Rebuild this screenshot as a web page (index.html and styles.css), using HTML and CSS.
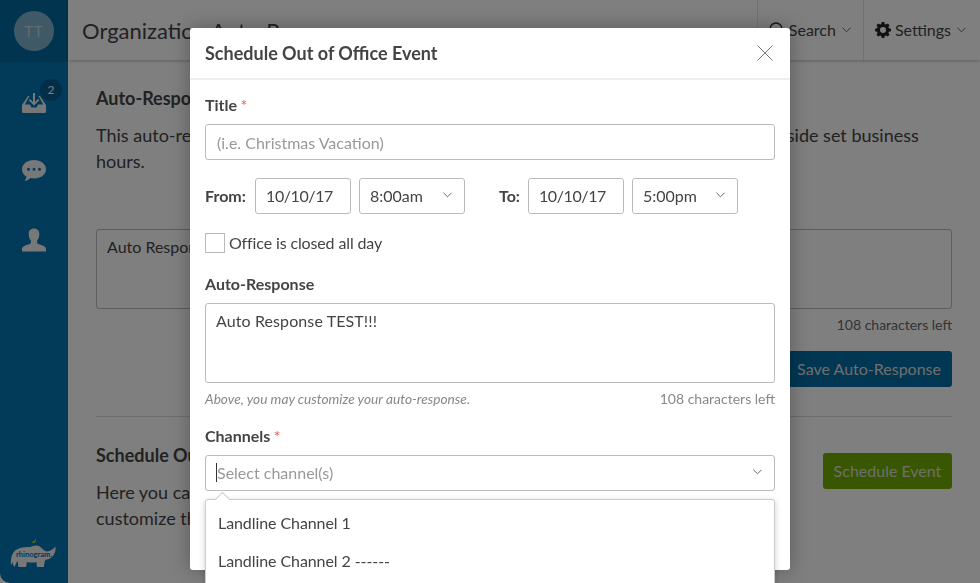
FILE: index.html
```html
<!DOCTYPE html>
<html lang="en">
<head>
    <meta charset="UTF-8">
    <meta name="viewport" content="width=device-width, initial-scale=1.0">
    <title>Organization Auto-Response</title>
    <link rel="stylesheet" href="styles.css">
</head>
<body>

    <div class="app">
        <aside class="sidebar">
            <div class="sidebar-top">
                <div class="avatar">TT</div>
            </div>
            <nav class="sidebar-nav">
                <a class="nav-item" href="#">
                    <svg class="nav-icon" viewBox="0 0 24 24"><path d="M6 6 0 15v6.500A1.500 1.500 0 0 0 1.500 23h21a1.500 1.500 0 0 0 1.500-1.500V15L18 6h-1.500l4.700 8.500H16l-1.500 3h-5l-1.500-3H2.800L7.500 6z"/><path d="M11 3h2v9l3-3 1.300 1.300L12 15.600 6.700 10.300 8 9l3 3z"/></svg>
                    <span class="nav-badge">2</span>
                </a>
                <a class="nav-item" href="#">
                    <svg class="nav-icon" viewBox="0 0 24 24"><path fill-rule="evenodd" d="M12 1c6.600 0 12 3.800 12 9.200s-5.400 9.300-12 9.300c-1.200 0-2.400-.1-3.500-.4-1.500 1.500-3.500 2.500-6 3 1-1.300 1.700-2.600 1.900-4.500C1.700 16 0 13.400 0 10.200 0 4.800 5.400 1 12 1zM6.500 8.700a1.500 1.500 0 1 0 0 3 1.500 1.500 0 0 0 0-3zm5.500 0a1.500 1.500 0 1 0 0 3 1.500 1.500 0 0 0 0-3zm5.500 0a1.500 1.500 0 1 0 0 3 1.500 1.500 0 0 0 0-3z"/></svg>
                </a>
                <a class="nav-item" href="#">
                    <svg class="nav-icon" viewBox="0 0 24 24"><path d="M12 .5c3.400 0 5.300 2.300 5.300 5.500 0 2.600-.8 5-2.200 6.400v2.300c0 .8 1 1.200 3.400 2.100 3.200 1.100 5.500 2.200 5.500 3.900v2.800H0v-2.800c0-1.700 2.300-2.800 5.500-3.900 2.400-.9 3.400-1.300 3.400-2.100v-2.300C7.500 11 6.700 8.600 6.700 6 6.700 2.800 8.600.5 12 .5z"/></svg>
                </a>
            </nav>
            <div class="logo">
                <svg class="logo-rhino" viewBox="0 -2 48 32"><path class="logo-bird" d="M22 3c.4-1.400 1.400-2.300 2.800-2.400l.5-2.400.7 2.200c-.3 1.900-1.800 3-4 2.600z"/><path d="M1 25c-.6-5 .4-11 4-14.500 4-3 10-3.800 15-3.500 2.500-.5 4.500-1.800 7-1.500 2 .3 3.700 1.500 5 3l3 2.500c1.500.5 3 .5 4.500 0 2-.8 4-2.300 6-4.500.5 4-.7 8-3.500 10.500-2 1.700-4 2.500-6.500 2.700-1 2-1.500 4-1.500 7.300h-7l-.7-5c-3 .8-6 .8-9.300 0l-1 5H8.500c-.5-2-.8-4-.5-6-1.500 1.200-2.500 3-3 5.500l-1.500-.5c-.5-1.500-.7-2.500-.5-4z"/></svg>
                <span class="logo-text">rhinogram.</span>
            </div>
        </aside>

        <div class="main">
            <header class="topbar">
                <h1 class="topbar-title">Organization Auto-Response</h1>
                <div class="topbar-item">
                    <svg class="search-icon" viewBox="0 0 16 16"><circle cx="7" cy="7" r="6"/><path d="M11.500 11.500 15.500 15.500"/></svg>
                    Search
                    <svg class="chevron" viewBox="0 0 10 6"><path d="M.5.5 5 5 9.500.5"/></svg>
                </div>
                <div class="topbar-item">
                    <svg class="gear-icon" viewBox="0 0 16 16"><path fill-rule="evenodd" d="M6.700 0h2.600l.4 2.100 1.200.5 1.800-1.200 1.900 1.900-1.200 1.800.5 1.200 2.100.4v2.600l-2.100.4-.5 1.200 1.200 1.800-1.900 1.900-1.800-1.200-1.200.5-.4 2.100H6.700l-.4-2.100-1.200-.5-1.800 1.200-1.900-1.900 1.200-1.800-.5-1.200L0 9.300V6.700l2.100-.4.5-1.200-1.200-1.800 1.900-1.900 1.800 1.200 1.200-.5zM8 5a3 3 0 1 0 0 6 3 3 0 0 0 0-6z"/></svg>
                    Settings
                    <svg class="chevron" viewBox="0 0 10 6"><path d="M.5.5 5 5 9.500.5"/></svg>
                </div>
            </header>

            <section class="section section-first">
                <h2 class="section-title">Auto-Response</h2>
                <p class="section-text">This auto-response will be sent to any new contacts who message your organization outside set business hours.</p>
                <div class="page-textarea">Auto Response TEST!!!</div>
                <div class="page-count">108 characters left</div>
                <div class="section-actions">
                    <button class="btn btn-blue" type="button">Save Auto-Response</button>
                </div>
            </section>

            <section class="section section-second">
                <div class="section-row">
                    <div class="section-copy">
                        <h2 class="section-title">Schedule Out of Office</h2>
                        <p class="section-text">Here you can schedule events when your office will be closed and<br>customize the message that is sent.</p>
                    </div>
                    <button class="btn btn-green" type="button">Schedule Event</button>
                </div>
            </section>
        </div>
    </div>

    <div class="overlay"></div>

    <div class="modal">
        <div class="modal-header">
            <h3 class="modal-title">Schedule Out of Office Event</h3>
            <svg class="modal-close" viewBox="0 0 16 16"><path d="M.5.500 15.500 15.500M15.500.500.500 15.500"/></svg>
        </div>
        <form class="modal-body">
            <label class="label" for="event-title">Title <span class="req">*</span></label>
            <input class="input" type="text" id="event-title" placeholder="(i.e. Christmas Vacation)">

            <div class="time-row">
                <div class="time-group">
                    <span class="time-label">From:</span>
                    <div class="field field-date">10/10/17</div>
                    <div class="field field-time">8:00am
                        <svg class="chevron" viewBox="0 0 10 6"><path d="M.5.5 5 5 9.500.5"/></svg>
                    </div>
                </div>
                <div class="time-group">
                    <span class="time-label">To:</span>
                    <div class="field field-date">10/10/17</div>
                    <div class="field field-time">5:00pm
                        <svg class="chevron" viewBox="0 0 10 6"><path d="M.5.5 5 5 9.500.5"/></svg>
                    </div>
                </div>
            </div>

            <div class="check-row">
                <span class="checkbox"></span>
                Office is closed all day
            </div>

            <div class="label label-response">Auto-Response</div>
            <div class="textarea">Auto Response TEST!!!</div>
            <div class="hint-row">
                <em class="hint">Above, you may customize your auto-response.</em>
                <span class="count">108 characters left</span>
            </div>

            <div class="label label-channels">Channels <span class="req">*</span></div>
            <div class="select-wrap">
                <div class="select">
                    <span class="caret"></span>
                    <span class="placeholder">Select channel(s)</span>
                    <svg class="chevron" viewBox="0 0 10 6"><path d="M.5.5 5 5 9.500.5"/></svg>
                </div>
                <div class="dropdown">
                    <div class="dropdown-item">Landline Channel 1</div>
                    <div class="dropdown-item">Landline Channel 2 ------</div>
                </div>
            </div>
        </form>
    </div>

</body>
</html>
```

FILE: styles.css
```css
* {
    box-sizing: border-box;
}
html, body {
    height: 100%;
}
body {
    margin: 0;
    overflow: hidden;
    font-family: Lato, "Open Sans", sans-serif;
    font-size: 16px;
    color: #444;
    background: #fff;
}
h1, h2, h3, p {
    margin: 0;
}

/* page behind the modal */
.app {
    display: flex;
    height: 583px;
    border-radius: 0 0 10px 10px;
    overflow: hidden;
    background: #fff;
}
.sidebar {
    width: 68px;
    flex-shrink: 0;
    display: flex;
    flex-direction: column;
    background: #0277b2;
}
.sidebar-top {
    height: 62px;
    display: flex;
    align-items: center;
    justify-content: center;
    background: #03699e;
}
.avatar {
    width: 40px;
    height: 40px;
    border-radius: 50%;
    display: flex;
    align-items: center;
    justify-content: center;
    font-size: 15px;
    letter-spacing: 1px;
    color: #c4d8e2;
    background: #7fb4cc;
}
.sidebar-nav {
    flex: 1;
    display: flex;
    flex-direction: column;
    align-items: center;
    padding-top: 28px;
    gap: 45px;
}
.nav-item {
    position: relative;
    display: block;
    width: 24px;
    height: 24px;
}
.nav-icon {
    display: block;
    width: 24px;
    height: 24px;
    fill: #f0f0f0;
}
.nav-badge {
    position: absolute;
    top: -11px;
    left: 18px;
    width: 22px;
    height: 22px;
    border-radius: 50%;
    font-size: 12px;
    line-height: 22px;
    text-align: center;
    color: #fff;
    background: #065c90;
}
.logo {
    position: relative;
    height: 32px;
    margin: 0 10px 13px;
}
.logo-rhino {
    display: block;
    width: 48px;
    height: 32px;
    fill: #f0f0f0;
}
.logo-rhino .logo-bird {
    fill: #a0d030;
}
.logo-text {
    position: absolute;
    top: 12px;
    left: 6px;
    font-size: 7.500px;
    font-weight: 700;
    color: #0277b2;
}

.main {
    flex: 1;
    min-width: 0;
}
.topbar {
    height: 60px;
    display: flex;
    align-items: stretch;
    padding-right: 2px;
    box-shadow: 0 1px 3px rgba(0, 0, 0, .25);
}
.topbar-title {
    flex: 1;
    padding-left: 14px;
    font-size: 22px;
    font-weight: 400;
    line-height: 62px;
    white-space: nowrap;
}
.topbar-item {
    display: flex;
    align-items: center;
    gap: 4px;
    padding: 0 12px 0 11px;
    border-left: 1px solid #e4e4e4;
    font-size: 16px;
    line-height: 1;
}
.chevron {
    width: 9px;
    height: 6px;
    margin-left: 2px;
    fill: none;
    stroke: #555;
    stroke-width: 1;
}
.search-icon {
    width: 16px;
    height: 16px;
    fill: none;
    stroke: #333;
    stroke-width: 1.500;
}
.gear-icon {
    width: 16px;
    height: 16px;
    fill: #222;
}

.section {
    margin: 0 28px;
}
.section-first {
    padding-top: 26px;
    height: 357px;
    border-bottom: 1px solid #ddd;
}
.section-second {
    padding-top: 26px;
}
.section-title {
    font-size: 18px;
    font-weight: 700;
    line-height: 24px;
}
.section-text {
    margin-top: 12px;
    font-size: 18px;
    line-height: 26px;
}
.page-textarea {
    height: 80px;
    margin-top: 55px;
    padding: 7px 10px;
    border: 1px solid #bbb;
    border-radius: 3px;
}
.page-count {
    margin-top: 7px;
    text-align: right;
    font-size: 14px;
    line-height: 17px;
    color: #666;
}
.section-actions {
    display: flex;
    justify-content: flex-end;
    margin-top: 18px;
}
.section-row {
    display: flex;
    justify-content: space-between;
    align-items: flex-start;
}
.section-copy {
    width: 600px;
}
.btn {
    height: 36px;
    border: none;
    border-radius: 3px;
    font-family: inherit;
    font-size: 16px;
    color: #ddd;
}
.btn-blue {
    padding: 0 11px 2px 10px;
    background: #036ea6;
}
.btn-green {
    margin-top: 10px;
    width: 129px;
    padding: 0 0 2px;
    background: #72ae00;
}

.overlay {
    position: fixed;
    top: 0;
    right: 0;
    bottom: 0;
    left: 0;
    background: rgba(0, 0, 0, .5);
}

/* modal */
.modal {
    position: absolute;
    top: 28px;
    left: 190px;
    width: 600px;
    height: 542px;
    border-radius: 3px;
    background: #fff;
    box-shadow: 0 0 20px rgba(0, 0, 0, .3);
}
.modal-header {
    height: 52px;
    display: flex;
    align-items: center;
    justify-content: space-between;
    padding: 0 17px 0 15px;
    border-bottom: 2px solid #eee;
}
.modal-title {
    font-size: 18px;
    font-weight: 700;
}
.modal-close {
    width: 16px;
    height: 16px;
    fill: none;
    stroke: #777;
    stroke-width: 1;
}
.modal-body {
    padding: 13px 15px 0;
}
.label {
    display: block;
    font-weight: 700;
    line-height: 24px;
}
.req {
    margin-left: -.5px;
    font-weight: 400;
    color: #e55;
}
.input {
    display: block;
    width: 100%;
    height: 36px;
    margin-top: 7px;
    padding: 0 11px;
    border: 1px solid #bbb;
    border-radius: 3px;
    font-family: inherit;
    font-size: 16px;
    color: #444;
}
.input::placeholder {
    color: #999;
}
.time-row {
    display: flex;
    gap: 34px;
    margin-top: 18px;
}
.time-group {
    display: flex;
    align-items: center;
    gap: 8px;
}
.time-label {
    padding-bottom: 1px;
    font-weight: 700;
}
.time-group:first-child .time-label {
    width: 42px;
}
.field {
    height: 36px;
    display: flex;
    align-items: center;
    border: 1px solid #bbb;
    border-radius: 3px;
    padding: 0 10px 2px;
}
.field-date {
    width: 96px;
    letter-spacing: -.4px;
}
.field-time {
    width: 106px;
    padding-right: 12px;
    justify-content: space-between;
}
.check-row {
    display: flex;
    align-items: center;
    gap: 4px;
    margin-top: 19px;
    line-height: 20px;
    letter-spacing: -.13px;
}
.checkbox {
    width: 20px;
    height: 20px;
    border: 1px solid #bbb;
}
.label-response {
    margin-top: 19px;
}
.textarea {
    height: 80px;
    margin-top: 7px;
    padding: 7px 10px;
    border: 1px solid #bbb;
    border-radius: 3px;
    letter-spacing: .1px;
}
.hint-row {
    display: flex;
    justify-content: space-between;
    margin-top: 7px;
    font-size: 14px;
    line-height: 18px;
    color: #888;
}
.hint {
    font-size: 13.700px;
}
.label-channels {
    margin-top: 16px;
}
.select-wrap {
    position: relative;
    margin-top: 7px;
}
.select {
    height: 36px;
    display: flex;
    align-items: center;
    padding: 0 12px 2px 10px;
    border: 1px solid #bbb;
    border-radius: 3px;
}
.caret {
    width: 1px;
    height: 19px;
    background: #333;
}
.placeholder {
    flex: 1;
    color: #999;
}
.dropdown {
    position: absolute;
    top: 44px;
    left: 0;
    right: 0;
    padding: 4px 0 8px;
    border: 1px solid #ccc;
    border-radius: 3px;
    background: #fff;
    box-shadow: 0 2px 6px rgba(0, 0, 0, .2);
}
.dropdown::before {
    content: "";
    position: absolute;
    top: -6px;
    left: 11px;
    width: 10px;
    height: 10px;
    border-top: 1px solid #ccc;
    border-left: 1px solid #ccc;
    background: #fff;
    transform: rotate(45deg);
}
.dropdown-item {
    padding: 0 12px;
    line-height: 38px;
    letter-spacing: -.08px;
}
```
